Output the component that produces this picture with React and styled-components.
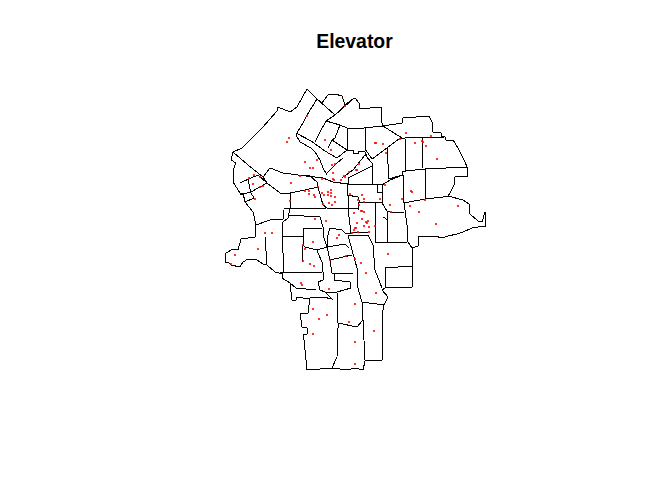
import React from 'react';
import styled, { createGlobalStyle } from 'styled-components';

const GlobalStyle = createGlobalStyle`
    html, body {
        margin: 0;
        padding: 0;
        background: #fff;
    }
`;

const Figure = styled.div`
    display: flex;
    flex-direction: column;
    width: 672px;
    height: 480px;
    background: #fff;
`;

const Title = styled.h1`
    margin: 0;
    height: 54px;
    padding: 30px 0 0 37px;
    box-sizing: border-box;
    text-align: center;
    font-family: "Liberation Sans", Arial, sans-serif;
    font-size: 19.4px;
    line-height: 22px;
    font-weight: bold;
    color: #000;
`;

const Map = styled.svg`
    display: block;
    width: 672px;
    height: 426px;
`;

const Ward = styled.polyline`
    fill: none;
    stroke: #000;
    stroke-width: 1;
    shape-rendering: crispEdges;
`;

const Dot = styled.circle`
    fill: #ff0000;
`;

// outer boundary first, then the inner ward lines
const wards = [
    '233,152 242,148 253,137 263,127 277,111 278,107 290,112 297,107 307,89 317,99 322,103 328,95 335,94 342,96 345,105 353,99 355,98 359,103 360,109 381,107 382,123 383,126 402,123 403,118 429,116 432,122 433,132 441,133 441,136 445,137 446,140 453,140 458,148 465,162 467,167 468,176 455,177 454,185 450,193 448,196 463,200 469,204 470,214 478,221 482,222 485,212 486,226 478,227 472,228 463,232 457,234 448,236 442,238 435,236 418,237 418,246 412,248 412,266 412,287 385,288 382,290 388,297 384,305 382,315 382,360 365,361 363,370 355,368 347,370 333,368 307,370 304,340 303,335 307,334 307,328 302,327 300,313 308,313 310,298 303,298 297,297 296,300 292,300 290,283 282,278 283,274 275,272 267,265 263,264 257,260 248,259 243,262 240,267 231,265 229,263 225,262 226,253 233,249 238,250 241,239 255,237 256,225 253,212 245,202 243,193 240,193 233,182 233,170 236,163 231,160 233,152',
    '317,99 307,115 303,123 297,133 296,135 300,142 311,148 315,152 320,160 323,168 327,175',
    '296,133 311,141 325,151 330,154 337,158 347,150',
    '317,99 335,115 353,99',
    '335,115 326,121 320,132 315,142',
    '335,115 345,105',
    '326,121 340,125 347,128 358,128 364,128 383,126',
    '340,125 335,138 332,140 328,148',
    '332,140 347,150',
    '347,128 347,150 353,150 353,153 358,153 358,151 365,152 367,157',
    '365,128 365,149 372,159 387,148 400,138 405,138 445,137',
    '383,126 402,138',
    '405,138 406,172',
    '422,137 422,168',
    '387,148 389,179 402,175 402,172 406,171 425,169 467,167',
    '425,169 425,199',
    '342,178 353,170 365,155 372,163 372,166 348,178 348,184',
    '372,166 373,184',
    '327,173 337,163 343,158',
    '233,152 248,165 263,177 270,168 283,173 298,175 310,176 317,182 318,187 323,205 327,208',
    '298,175 323,178 333,182 348,184 377,184 377,192 382,192 382,203',
    '240,183 251,178 258,175 267,183 280,193 290,193 305,190 318,187',
    '240,195 251,192 267,183',
    '248,180 251,193 254,198 245,202',
    '263,177 267,183',
    '290,193 290,209 288,218 283,222 282,237 283,253 283,273',
    '284,209 327,208 358,208',
    '348,195 348,208 351,234',
    '347,195 358,197 360,203 374,202 382,203',
    '348,184 347,195',
    '358,202 358,210',
    '375,203 375,243',
    '256,225 270,220 283,219 284,210',
    '288,215 320,217 323,227 323,235 327,247',
    '303,228 322,228',
    '303,228 303,245 302,262',
    '282,237 303,236',
    '303,245 305,247 317,250 318,253 322,262 323,272',
    '317,250 327,247 330,260 332,273 353,273',
    '330,228 342,230 345,233 352,233 368,232',
    '330,228 327,238 327,247',
    '327,247 345,244 349,248',
    '330,260 352,255',
    '323,272 280,273',
    '265,237 267,265',
    '348,235 368,235 373,245 375,270 382,288',
    '348,235 352,250 357,268 358,288 362,302 363,320 357,327 338,323 337,293',
    '338,323 338,328 337,357 332,368',
    '363,320 365,360',
    '362,302 384,305',
    '375,243 408,242 412,248',
    '387,225 387,243',
    '404,203 407,225 408,242',
    '385,268 412,266',
    '385,268 385,288',
    '377,184 382,185 390,180 403,175 404,203 425,199 443,197 448,196',
    '382,185 382,203 387,211 390,212 404,213',
    '387,211 387,225',
    '383,217 388,220',
    '334,273 334,280 350,282 351,288 337,292 325,292 320,290 318,282 323,280 323,272',
    '310,298 323,297 332,299 325,292',
    '290,283 296,288 316,290',
];

const dots = [
    [289, 138], [287, 142], [307, 116], [345, 106], [325, 140], [331, 150], [305, 162], [317, 160],
    [310, 168], [313, 168], [332, 165], [335, 164], [333, 173], [344, 176], [345, 177], [349, 172],
    [357, 170], [356, 170], [359, 164], [254, 175], [249, 178], [260, 177], [300, 176], [322, 179],
    [333, 179], [375, 143], [376, 143], [383, 144], [386, 153], [400, 139], [406, 133], [415, 143],
    [422, 141], [423, 142], [431, 136], [426, 146], [437, 159], [253, 184], [260, 187], [263, 186],
    [255, 199], [291, 183], [290, 201], [305, 191], [309, 191], [309, 194], [314, 195], [315, 197],
    [318, 187], [334, 180], [341, 180], [322, 193], [324, 195], [328, 192], [331, 190], [331, 193],
    [328, 195], [331, 196], [335, 197], [335, 202], [329, 203], [332, 205], [323, 204], [350, 194],
    [358, 200], [359, 205], [354, 213], [315, 219], [326, 221], [265, 233], [272, 233], [357, 223],
    [355, 228], [356, 228], [354, 230], [352, 233], [358, 232], [339, 235], [337, 238], [313, 242],
    [303, 245], [305, 249], [258, 249], [235, 255], [231, 264], [303, 261], [310, 264], [314, 266],
    [330, 260], [346, 256], [355, 259], [385, 185], [411, 191], [412, 192], [362, 195], [364, 199],
    [364, 202], [380, 199], [402, 199], [425, 200], [390, 205], [410, 206], [458, 206], [419, 212],
    [391, 212], [361, 211], [362, 211], [364, 212], [362, 219], [368, 221], [366, 222], [367, 223],
    [364, 226], [369, 227], [375, 226], [369, 232], [436, 224], [388, 254], [361, 263], [366, 273],
    [301, 283], [302, 285], [329, 289], [376, 293], [355, 304], [313, 309], [327, 315], [319, 319],
    [349, 322], [374, 331], [313, 334], [355, 342], [355, 364],
];

const App = () => {
    return (
        <Figure>
            <GlobalStyle />
            <Title>Elevator</Title>
            <Map viewBox="0 54 672 426">
                {wards.map((points, i) => <Ward key={i} points={points} />)}
                {dots.map(([x, y], i) => <Dot key={i} cx={x} cy={y} r="1.1" />)}
            </Map>
        </Figure>
    );
};

export default App;
